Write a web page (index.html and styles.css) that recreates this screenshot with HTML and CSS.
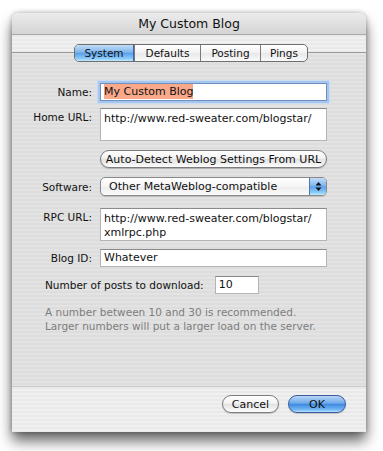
FILE: index.html
```html
<!DOCTYPE html>
<html lang="en">
<head>
    <meta charset="UTF-8">
    <title>My Custom Blog</title>
    <link rel="stylesheet" href="styles.css">
</head>
<body>

    <div class="window">
        <div class="titlebar">My Custom Blog</div>

        <!-- Tabs -->
        <div class="tabbar">
            <div class="tabs">
                <span class="tab tab-system selected">System</span>
                <span class="tab tab-defaults">Defaults</span>
                <span class="tab tab-posting">Posting</span>
                <span class="tab tab-pings">Pings</span>
            </div>
        </div>

        <!-- System panel -->
        <div class="panel">
            <div class="row row-name">
                <label>Name:</label>
                <div class="field focused"><span class="selection">My Custom Blog</span></div>
            </div>
            <div class="row row-home">
                <label>Home URL:</label>
                <div class="field area">http://www.red-sweater.com/blogstar/</div>
            </div>
            <div class="row row-detect">
                <span></span>
                <button class="pill detect">Auto-Detect Weblog Settings From URL</button>
            </div>
            <div class="row row-software">
                <label>Software:</label>
                <div class="popup">
                    <span class="popup-text">Other MetaWeblog-compatible</span>
                    <span class="popup-arrows">
                        <svg width="7" height="11" viewBox="0 0 7 11">
                            <path d="M3.5 1 L6.5 4.5 L0.5 4.5 Z" fill="#111"/>
                            <path d="M3.5 10 L6.5 6.5 L0.5 6.5 Z" fill="#111"/>
                        </svg>
                    </span>
                </div>
            </div>
            <div class="row row-rpc">
                <label>RPC URL:</label>
                <div class="field area">http://www.red-sweater.com/blogstar/<br>xmlrpc.php</div>
            </div>
            <div class="row row-blogid">
                <label>Blog ID:</label>
                <div class="field">Whatever</div>
            </div>
            <div class="count-row">
                <label>Number of posts to download:</label>
                <div class="field count">10</div>
            </div>
            <p class="help">A number between 10 and 30 is recommended.<br>Larger numbers will put a larger load on the server.</p>
        </div>

        <div class="footer">
            <button class="pill cancel">Cancel</button>
            <button class="pill ok">OK</button>
        </div>
    </div>

</body>
</html>
```

FILE: styles.css
```css
html {
    background-color: #ffffff;
}

body {
    margin: 0;
    padding: 13px 0 20px 12px;
    min-height: 451px;
    box-sizing: border-box;
    font-family: "DejaVu Sans", "Lucida Grande", sans-serif;
    color: #111;
}

.window {
    width: 354px;
    height: 419px;
    border-radius: 7px 7px 0 0;
    background: repeating-linear-gradient(to bottom, #f0f0f0 0 2px, #e9e9e9 2px 4px);
    box-shadow: 0 9px 14px rgba(0, 0, 0, 0.6), 0 0 5px rgba(0, 0, 0, 0.3);
    overflow: hidden;
}

.titlebar {
    height: 22px;
    box-sizing: border-box;
    line-height: 22px;
    text-align: center;
    font-size: 12.5px;
    color: #111;
    background: linear-gradient(to bottom, #ececec, #d4d4d4);
    border-bottom: 1px solid #a8a8a8;
}

.tabbar {
    height: 27px;
    box-sizing: border-box;
    padding-top: 9px;
    background:
        linear-gradient(to bottom, transparent 17px, #9a9a9a 17px, #9a9a9a 18px, rgba(0, 0, 0, 0.05) 18px);
}

.tabs {
    display: flex;
    width: 234px;
    height: 18px;
    box-sizing: border-box;
    margin-left: 62px;
    border: 1px solid #6e6e6e;
    border-radius: 5px;
    overflow: hidden;
    background: linear-gradient(to bottom, #ffffff, #f1f1f1 50%, #e8e8e8 51%, #fafafa);
}

.tab {
    font-size: 10.5px;
    line-height: 16px;
    text-align: center;
    border-left: 1px solid #7a7a7a;
}

.tab-system {
    width: 58px;
    border-left: none;
}

.tab-defaults {
    width: 65px;
}

.tab-posting {
    width: 59px;
}

.tab-pings {
    flex: 1;
}

.tab.selected {
    background: linear-gradient(to bottom, #c3dcf7, #7fb6ef 45%, #5ca0ea 52%, #8ccaf9 85%, #c2ecff);
    border-right: 1px solid #3c66a8;
}

.panel {
    height: 324px;
    box-sizing: border-box;
    padding-top: 21px;
    background-color: rgba(0, 0, 0, 0.05);
}

.row {
    display: grid;
    grid-template-columns: 80px 227px;
    column-gap: 8px;
    align-items: center;
}

.row label {
    text-align: right;
    font-size: 10.5px;
}

.row-home,
.row-rpc {
    align-items: start;
}

.row-home label,
.row-rpc label {
    padding-top: 3px;
}

.row-home {
    margin-top: 7px;
}

.row-detect {
    margin-top: 9px;
}

.row-software {
    margin-top: 9px;
}

.row-rpc {
    margin-top: 12px;
}

.row-blogid {
    margin-top: 8px;
}

.field {
    height: 18px;
    box-sizing: border-box;
    padding: 0 3px;
    font-size: 11px;
    line-height: 16px;
    background-color: #ffffff;
    border: 1px solid #b4b4b4;
    border-top-color: #8a8a8a;
    white-space: nowrap;
}

.field.area {
    height: 33px;
    padding-top: 3px;
    line-height: 14px;
}

.field.focused {
    border-color: #6f8fbf;
    box-shadow: 0 0 0 2px #a6c6ee, 0 0 1px 3px #c9dcf4;
}

.selection {
    display: inline-block;
    background-color: #f9a88a;
    line-height: 15px;
}

.pill {
    font-family: "DejaVu Sans", "Lucida Grande", sans-serif;
    font-size: 11px;
    height: 18px;
    padding: 0;
    border: 1px solid #7c7c7c;
    border-radius: 9px;
    color: #111;
    background: linear-gradient(to bottom, #ffffff, #f3f3f3 45%, #e2e2e2 52%, #f4f4f4 85%, #ffffff);
    box-shadow: 0 1px 1px rgba(0, 0, 0, 0.2);
}

.detect {
    width: 227px;
}

.popup {
    display: flex;
    height: 19px;
    box-sizing: border-box;
    border: 1px solid #8a8a8a;
    border-radius: 5px;
    overflow: hidden;
    background: linear-gradient(to bottom, #ffffff, #f5f5f5 50%, #ececec 51%, #fbfbfb);
    box-shadow: 0 1px 1px rgba(0, 0, 0, 0.15);
}

.popup-text {
    flex: 1;
    padding-left: 8px;
    font-size: 11px;
    line-height: 17px;
}

.popup-arrows {
    width: 16px;
    display: flex;
    align-items: center;
    justify-content: center;
    border-left: 1px solid #4f75b4;
    background: linear-gradient(to bottom, #c3dcf7, #7fb6ef 45%, #5ca0ea 52%, #8ccaf9 85%, #c2ecff);
}

.count-row {
    display: flex;
    align-items: center;
    gap: 11px;
    margin: 9px 0 0 33px;
}

.count-row label {
    font-size: 10.5px;
}

.field.count {
    width: 44px;
}

.help {
    margin: 11px 0 0 33px;
    font-size: 10.5px;
    line-height: 14px;
    color: #7d7d7d;
}

.footer {
    height: 46px;
    box-sizing: border-box;
    border-top: 1px solid #cbcbcb;
    padding: 8px 20px 0 0;
    display: flex;
    justify-content: flex-end;
    align-items: flex-start;
    gap: 9px;
}

.cancel {
    width: 57px;
}

.ok {
    width: 58px;
    border-color: #3a5c9c;
    background: linear-gradient(to bottom, #b9d6f6, #6faaeb 45%, #3f89e0 52%, #72b8f5 85%, #b6e4ff);
}
```
